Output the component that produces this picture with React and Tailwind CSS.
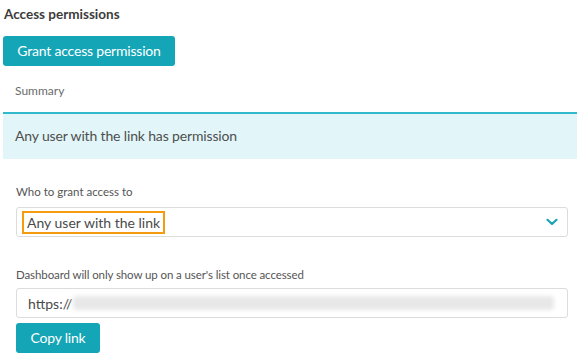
import { useState } from 'react';

const font = { fontFamily: 'Lato, "Noto Sans", sans-serif' };

const App = () => {
    const [grantTo] = useState('Any user with the link');

    return (
        <div className="w-[577px] h-[355px] bg-white overflow-hidden pl-[3px] text-[#454646]" style={font}>
            {/* Header */}
            <h2 className="pt-[4px] pl-px text-[13.5px] leading-5 font-bold text-[#3c3c3c]">Access permissions</h2>
            <button className="mt-[12px] h-[30px] w-[172px] rounded-[3px] bg-[#14a5b6] text-white text-[14px] tracking-[-0.2px] leading-none">
                Grant access permission
            </button>

            {/* Summary */}
            <p className="mt-[17px] mb-[13px] pl-3 text-[12px] leading-4 text-[#6b6b6b]">Summary</p>
            <div className="h-[47px] border-t-2 border-[#33b9cc] bg-[#e2f6f9] pl-3 pt-[12px]">
                <p className="text-[14px] tracking-[-0.15px] leading-5 text-[#4e4e4e]">Any user with the link has permission</p>
            </div>

            <div className="pl-[13px] pr-[9px]">
                {/* Who */}
                <p className="mt-[25px] text-[11.5px] leading-4 text-[#555]">Who to grant access to</p>
                <div className="mt-[7px] h-[30px] border border-[#dcdcdc] rounded-[3px] flex items-center justify-between pl-[5px] pr-[9px]">
                    <span className="h-[23px] border-2 border-[#f59b0f] px-[3px] text-[14px] leading-[19px] text-[#4a4a4a]">{grantTo}</span>
                    <svg width="12" height="8" viewBox="0 0 12 8" fill="none">
                        <path d="M1.5 1.8 6 6 10.5 1.8" stroke="#1aa3b5" strokeWidth="2.2" strokeLinecap="round" strokeLinejoin="round" />
                    </svg>
                </div>

                {/* Link */}
                <p className="mt-[30px] text-[11.5px] tracking-[-0.1px] leading-4 text-[#555]">Dashboard will only show up on a user's list once accessed</p>
                <div className="mt-[5px] h-[30px] border border-[#dcdcdc] rounded-[3px] flex items-center pl-[11px] pr-[13px]">
                    <span className="text-[14px] text-[#4a4a4a]">https://</span>
                    <div className="flex-1 h-[14px] ml-px bg-[#e8e8e8] blur-[2px] rounded-sm"></div>
                </div>
                <button className="mt-[5px] h-[30px] w-[84px] rounded-[3px] bg-[#14a5b6] text-white text-[14px] tracking-[-0.2px] leading-none">
                    Copy link
                </button>
            </div>
        </div>
    );
};

export default App;
